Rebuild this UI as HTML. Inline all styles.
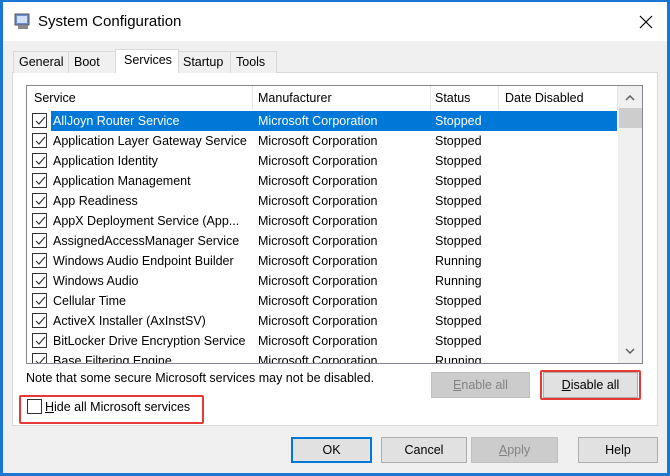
<!DOCTYPE html><html><head><style>
*{margin:0;padding:0;box-sizing:border-box}
body{width:670px;height:476px;background:#1976d2;font-family:"Liberation Sans",sans-serif;font-size:12.5px;color:#000;position:relative;overflow:hidden}
.win{position:absolute;left:3px;top:2px;width:664px;height:471px;background:#f0f0f0}
.title{position:absolute;left:0;top:0;width:664px;height:39px;background:#fff}
.a{position:absolute;white-space:nowrap}
.tab{position:absolute;top:51px;height:22px;border:1px solid #d9d9d9;border-bottom:none;background:#f0f0f0;padding:3px 0 0 5px}
.panel{position:absolute;left:12px;top:72px;width:646px;height:354px;background:#fff;border:1px solid #d9d9d9}
.list{position:absolute;left:26px;top:85px;width:617px;height:279px;border:1px solid #828790;background:#fff;overflow:hidden}
.row{position:absolute;left:0;height:20px;width:590px}
.cb{position:absolute;left:5px;top:2px;width:15px;height:15px;border:1px solid #333;background:#fff}
.cb svg{position:absolute;left:1px;top:1px}
.btn{position:absolute;height:26px;border:1px solid #adadad;background:#e1e1e1;text-align:center;line-height:24px}
.red{position:absolute;border:2px solid #e53935;border-radius:2px}
</style></head><body>
<div class="win"></div>
<div class="title" style="left:3px;top:2px"></div>
<svg class="a" style="left:13px;top:12px" width="20" height="20" viewBox="0 0 20 20"><rect x="2" y="2" width="14" height="11" fill="#6b8fd6" stroke="#555"/><rect x="4" y="4" width="10" height="7" fill="#cfe0ff"/><rect x="5" y="13" width="10" height="4" fill="#888"/></svg>
<div class="a" style="left:38px;top:13px;font-size:15px">System Configuration</div>
<svg class="a" style="left:639px;top:15px" width="14" height="14"><path d="M1 1L13 13M13 1L1 13" stroke="#000" stroke-width="1.2"/></svg>
<div class="panel"></div>
<div class="tab" style="left:13px;width:56px">General</div>
<div class="tab" style="left:68px;width:48px">Boot</div>
<div class="tab" style="left:230px;width:47px">Tools</div>
<div class="tab" style="left:177px;width:54px">Startup</div>
<div class="tab" style="left:115px;top:49px;height:24px;width:64px;background:#fff;padding:3px 0 0 8px">Services</div>
<div class="list">
<div class="a" style="left:225px;top:0;width:1px;height:24px;background:#e5e5e5"></div>
<div class="a" style="left:403px;top:0;width:1px;height:24px;background:#e5e5e5"></div>
<div class="a" style="left:471px;top:0;width:1px;height:24px;background:#e5e5e5"></div>
<div class="a" style="left:590px;top:0;width:1px;height:24px;background:#e5e5e5"></div>
<div class="a" style="left:7px;top:5px">Service</div>
<div class="a" style="left:231px;top:5px">Manufacturer</div>
<div class="a" style="left:408px;top:5px">Status</div>
<div class="a" style="left:478px;top:5px">Date Disabled</div>
<div class="a" style="left:591px;top:0;width:25px;height:277px;background:#f0f0f0"></div>
<div class="a" style="left:592px;top:22px;width:23px;height:20px;background:#cdcdcd"></div>
<svg class="a" style="left:598px;top:9px" width="10" height="6"><path d="M1 5L5 1L9 5" fill="none" stroke="#606060" stroke-width="1.5"/></svg>
<svg class="a" style="left:598px;top:262px" width="10" height="6"><path d="M1 1L5 5L9 1" fill="none" stroke="#606060" stroke-width="1.5"/></svg>
<div id="rows"></div>
</div>
<div class="a" style="left:26px;top:371px">Note that some secure Microsoft services may not be disabled.</div>
<div class="btn" style="left:431px;top:372px;width:99px;color:#838383;border-color:#bfbfbf;background:#ccc"><u>E</u>nable all</div>
<div class="btn" style="left:543px;top:372px;width:95px"><u>D</u>isable all</div>
<div class="red" style="left:540px;top:370px;width:101px;height:30px"></div>
<div class="a" style="left:27px;top:399px;width:15px;height:15px;border:1px solid #333;background:#fff"></div>
<div class="a" style="left:45px;top:400px"><u>H</u>ide all Microsoft services</div>
<div class="red" style="left:19px;top:395px;width:185px;height:29px"></div>
<div class="btn" style="left:291px;top:437px;width:81px;border:2px solid #0078d7;line-height:22px">OK</div>
<div class="btn" style="left:381px;top:437px;width:86px">Cancel</div>
<div class="btn" style="left:471px;top:437px;width:87px;color:#838383;border-color:#bfbfbf;background:#ccc"><u>A</u>pply</div>
<div class="btn" style="left:578px;top:437px;width:80px">Help</div>
<script>
var d=[["AllJoyn Router Service","Stopped"],["Application Layer Gateway Service","Stopped"],["Application Identity","Stopped"],["Application Management","Stopped"],["App Readiness","Stopped"],["AppX Deployment Service (App...","Stopped"],["AssignedAccessManager Service","Stopped"],["Windows Audio Endpoint Builder","Running"],["Windows Audio","Running"],["Cellular Time","Stopped"],["ActiveX Installer (AxInstSV)","Stopped"],["BitLocker Drive Encryption Service","Stopped"],["Base Filtering Engine","Running"]];
var h="";d.forEach(function(r,i){var t=25+i*20,s=i==0;
h+='<div class="row" style="top:'+t+'px">'+(s?'<div class="a" style="left:24px;top:0;width:566px;height:20px;background:#0078d7"></div>':'')+
'<div class="cb"><svg width="12" height="12"><path d="M2 6L5 9L11 2" fill="none" stroke="#333" stroke-width="1.2"/></svg></div>'+
'<div class="a" style="left:26px;top:3px;'+(s?'color:#fff':'')+'">'+r[0]+'</div><div class="a" style="left:231px;top:3px;'+(s?'color:#fff':'')+'">Microsoft Corporation</div><div class="a" style="left:408px;top:3px;'+(s?'color:#fff':'')+'">'+r[1]+'</div></div>';});
document.getElementById("rows").innerHTML=h;
</script>
</body></html>
